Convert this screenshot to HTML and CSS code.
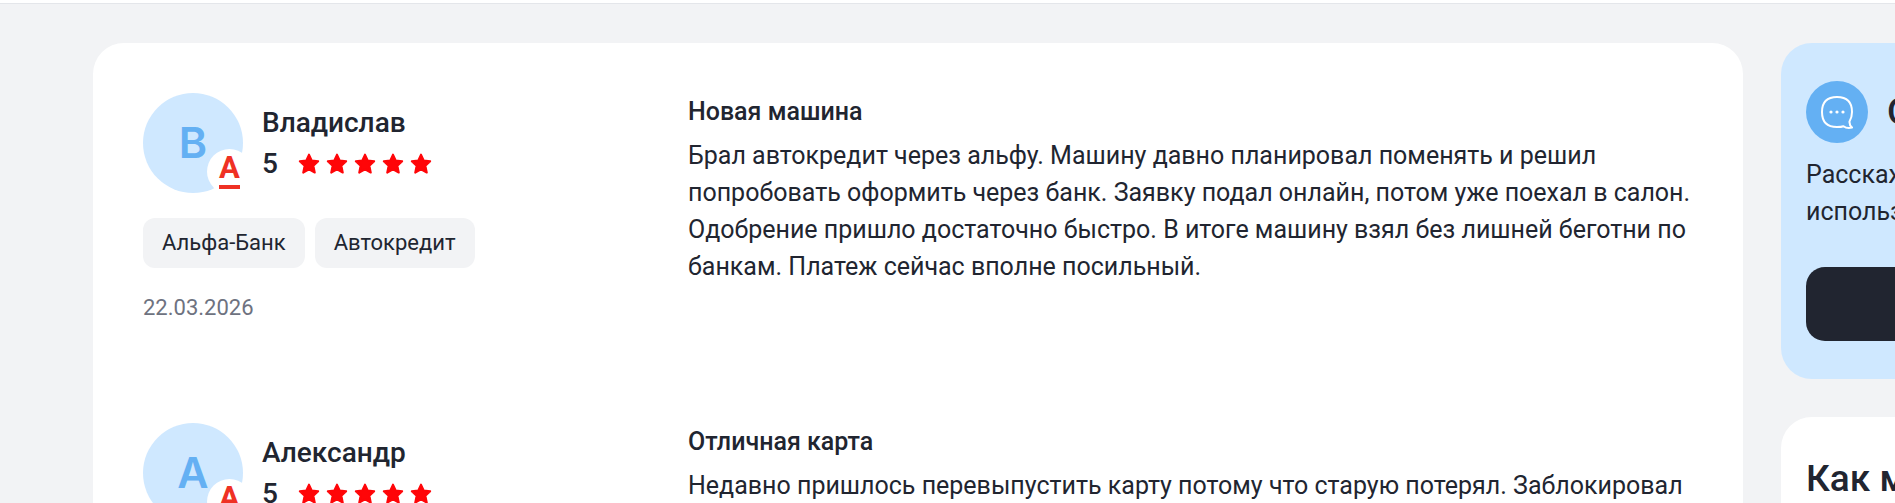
FILE: index.html
```html
<!DOCTYPE html>
<html lang="ru">
  <head>
    <meta charset="utf-8">
    <meta name="viewport" content="width=device-width, initial-scale=1">
    <title>Отзывы</title>
    <link rel="stylesheet" href="styles.css">
  </head>
  <body>
    <svg class="sprite" aria-hidden="true">
      <symbol id="star" viewBox="0 0 22 22">
        <path d="M11 1.6 L13.7 7.4 L20.2 8.2 L15.4 12.7 L16.8 19.6 L11 16.3 L5.2 19.6 L6.6 12.7 L1.8 8.2 L8.3 7.4 Z" fill="#ff0508" stroke="#ff0508" stroke-width="2" stroke-linejoin="round"/>
      </symbol>
    </svg>
    <header class="header"></header>
    <div class="layout">
      <main class="reviews">
        <article class="review">
          <div class="review-info">
            <div class="author">
              <div class="avatar">
                В
                <div class="bank-badge"><span class="bank-logo">А</span></div>
              </div>
              <div>
                <div class="author-name">Владислав</div>
                <div class="rating">
                  <span class="rating-value">5</span>
                  <div class="stars">
                    <svg class="star"><use href="#star"/></svg>
                    <svg class="star"><use href="#star"/></svg>
                    <svg class="star"><use href="#star"/></svg>
                    <svg class="star"><use href="#star"/></svg>
                    <svg class="star"><use href="#star"/></svg>
                  </div>
                </div>
              </div>
            </div>
            <div class="tags">
              <a class="tag" href="#">Альфа-Банк</a>
              <a class="tag" href="#">Автокредит</a>
            </div>
            <time class="date" datetime="2026-03-22">22.03.2026</time>
          </div>
          <div class="review-body">
            <h3 class="review-title">Новая машина</h3>
            <p class="review-text">Брал автокредит через альфу. Машину давно планировал поменять и решил попробовать оформить через банк. Заявку подал онлайн, потом уже поехал в салон. Одобрение пришло достаточно быстро. В итоге машину взял без лишней беготни по банкам. Платеж сейчас вполне посильный.</p>
          </div>
        </article>
        <article class="review">
          <div class="review-info">
            <div class="author">
              <div class="avatar">
                А
                <div class="bank-badge"><span class="bank-logo">А</span></div>
              </div>
              <div>
                <div class="author-name">Александр</div>
                <div class="rating">
                  <span class="rating-value">5</span>
                  <div class="stars">
                    <svg class="star"><use href="#star"/></svg>
                    <svg class="star"><use href="#star"/></svg>
                    <svg class="star"><use href="#star"/></svg>
                    <svg class="star"><use href="#star"/></svg>
                    <svg class="star"><use href="#star"/></svg>
                  </div>
                </div>
              </div>
            </div>
          </div>
          <div class="review-body">
            <h3 class="review-title">Отличная карта</h3>
            <p class="review-text">Недавно пришлось перевыпустить карту потому что старую потерял. Заблокировал</p>
          </div>
        </article>
      </main>
      <aside class="sidebar">
        <section class="card card-blue">
          <div class="card-head">
            <div class="card-icon">
              <svg width="34" height="34" viewBox="0 0 34 34" fill="none">
                <path d="M17 2 C27 2 32 7 32 17 C32 21 31 24 29.5 26.5 C29.3 29 30.3 31 32 32.6 C28.5 33.4 25.5 32.8 23.5 31.2 C21.5 32 19 32 17 32 C7 32 2 27 2 17 C2 7 7 2 17 2 Z" stroke="#fff" stroke-width="2" stroke-linejoin="round"/>
                <circle cx="11" cy="17" r="1.6" fill="#fff"/>
                <circle cx="17" cy="17" r="1.6" fill="#fff"/>
                <circle cx="23" cy="17" r="1.6" fill="#fff"/>
              </svg>
            </div>
            <h2 class="card-title">Оставьте отзыв</h2>
          </div>
          <p class="card-text">Расскажите о своём опыте<br>использования продукта</p>
          <button class="card-button" type="button" aria-label="Оставить отзыв"></button>
        </section>
        <section class="card card-white">
          <h2 class="card-title">Как мы проверяем</h2>
        </section>
      </aside>
    </div>
  </body>
</html>
```
FILE: styles.css
```css
* {
  box-sizing: border-box;
}

body {
  margin: 0;
  font-family: Roboto, Arial, sans-serif;
  font-size: 25px;
  line-height: 37px;
  color: #212530;
  background-color: #f2f3f5;
  overflow: hidden;
}

h2,
h3,
p {
  margin: 0;
}

.sprite {
  display: none;
}

.header {
  height: 4px;
  background-color: #fff;
  border-bottom: 1px solid #e4e6ea;
}

.layout {
  display: grid;
  grid-template-columns: 1fr 525px;
  gap: 38px;
  align-items: start;
  margin: 39px -411px 0 93px;
}

/* reviews list */
.reviews {
  display: flex;
  flex-direction: column;
  gap: 100px;
  padding: 50px;
  background-color: #fff;
  border-radius: 31px;
}

.review {
  display: grid;
  grid-template-columns: 520px 1fr;
  gap: 25px;
}

.author {
  display: flex;
  align-items: center;
  gap: 19px;
}

.avatar {
  position: relative;
  display: flex;
  align-items: center;
  justify-content: center;
  width: 100px;
  height: 100px;
  padding-bottom: 2px;
  border-radius: 50%;
  background-color: #cfe8ff;
  color: #64b0f3;
  font-family: Inter, Arial, sans-serif;
  font-size: 43px;
  font-weight: 600;
}

.bank-badge {
  position: absolute;
  right: -9px;
  bottom: -1px;
  display: flex;
  justify-content: center;
  align-items: center;
  width: 45px;
  height: 45px;
  border-radius: 50%;
  background-color: #fff;
}

.bank-logo {
  padding-bottom: 3px;
  border-bottom: 4px solid #ef3124;
  color: #ef3124;
  font-family: Roboto, Arial, sans-serif;
  font-size: 31px;
  font-weight: 700;
  line-height: 28px;
}

.author-name,
.rating {
  font-size: 28px;
  font-weight: 500;
  line-height: 41px;
}

.rating {
  display: flex;
  align-items: center;
  gap: 20px;
}

.stars {
  display: flex;
  gap: 6px;
}

.star {
  width: 22px;
  height: 22px;
}

.tags {
  display: flex;
  gap: 10px;
  margin-top: 25px;
}

.tag {
  padding: 0 19px;
  border-radius: 12px;
  background-color: #f2f3f5;
  color: #212530;
  font-size: 22px;
  line-height: 50px;
  text-decoration: none;
}

.date {
  display: block;
  margin-top: 24px;
  color: #6e7280;
  font-size: 22px;
  line-height: 31px;
}

.review-title {
  margin-bottom: 7px;
  font-size: 25px;
  font-weight: 500;
}

/* sidebar */
.sidebar {
  display: flex;
  flex-direction: column;
  gap: 38px;
}

.card {
  padding: 38px 25px;
  border-radius: 31px;
}

.card-blue {
  background-color: #cfe8ff;
}

.card-white {
  background-color: #fff;
}

.card-head {
  display: flex;
  align-items: center;
  gap: 19px;
  margin-bottom: 13px;
}

.card-icon {
  display: flex;
  align-items: center;
  justify-content: center;
  width: 62px;
  height: 62px;
  border-radius: 50%;
  background-color: #64b0f3;
}

.card-title {
  font-size: 37px;
  font-weight: 500;
  line-height: 48px;
}

.card-button {
  display: block;
  width: 100%;
  height: 74px;
  margin-top: 37px;
  border: none;
  border-radius: 19px;
  background-color: #212530;
  cursor: pointer;
}
```
